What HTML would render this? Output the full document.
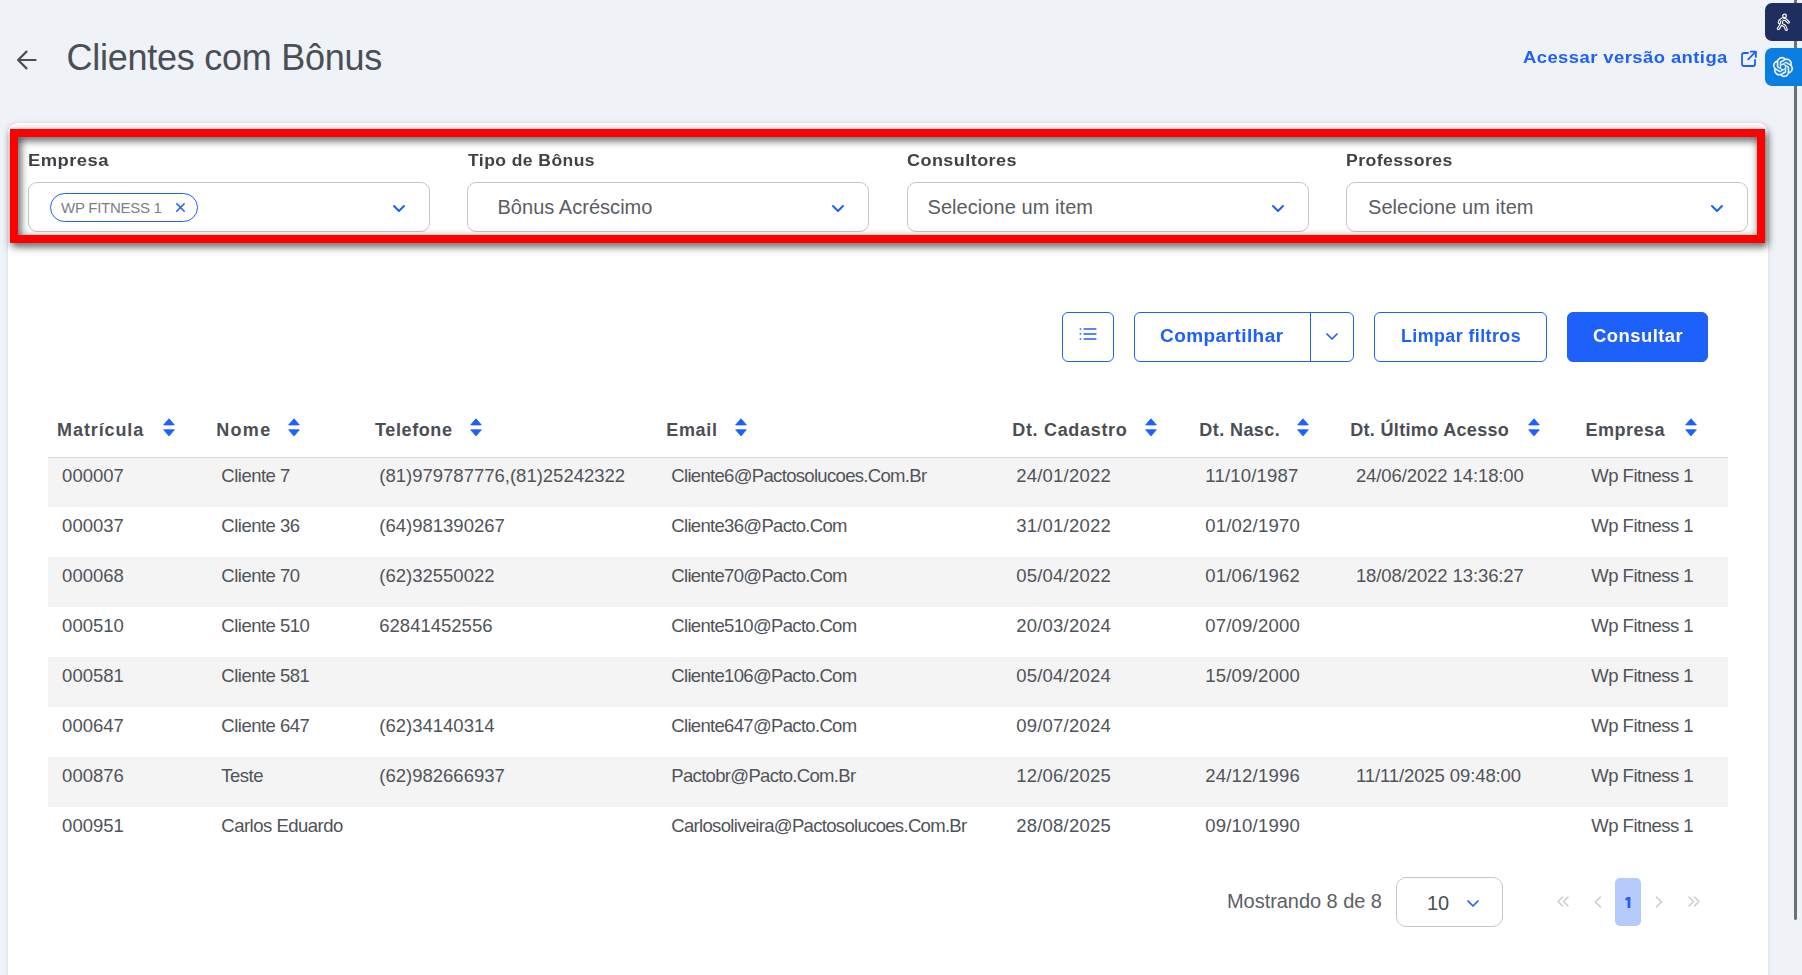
<!DOCTYPE html>
<html lang="pt-BR">
<head>
<meta charset="utf-8">
<title>Clientes com Bônus</title>
<style>
*{box-sizing:border-box;margin:0;padding:0}
html,body{width:1802px;height:975px;overflow:hidden}
body{background:#eff2f7;font-family:"Liberation Sans",sans-serif;position:relative;color:#4b4e55}
.abs{position:absolute}
.t{position:absolute;white-space:nowrap;line-height:1}
.b{font-weight:700}
svg{display:block;overflow:visible}
/* header */
.title{left:66.6px;top:40px;font-size:36px;letter-spacing:-0.27px;color:#4b4e55}
.link{left:1523px;top:49px;font-size:17px;letter-spacing:0.4px;transform:scaleX(1.084);transform-origin:0 0;color:#1e60fa;font-weight:700}
.side{position:absolute;left:1765px;width:45px;border-radius:7px}
.scroll{position:absolute;left:1794px;top:-4px;width:3px;height:924px;border-radius:2px;background:#6b7079}
/* card */
.card{position:absolute;left:8px;top:123px;width:1760px;height:900px;background:#fff;border-radius:9px;box-shadow:0 0 1px rgba(0,0,0,.18),0 0 6px rgba(0,0,0,.08)}
.red{position:absolute;left:10px;top:129px;width:1755px;height:114px;border:8px solid #ff0000;filter:drop-shadow(2px 3px 4px rgba(20,30,30,.85))}
.lbl{font-size:16px;font-weight:700;color:#3f4247;top:153px;transform-origin:0 0}
.sel{position:absolute;top:182px;width:402px;height:50px;border:1px solid #c5c7cc;border-radius:9px;background:#fff}
.seltxt{font-size:20px;color:#5a5d63;top:197px;letter-spacing:0px}
.chev{position:absolute}
/* buttons */
.btn{position:absolute;top:312px;height:50px;border:1px solid #1e60fa;border-radius:6px;background:#fff}
.btxt{font-size:17.5px;font-weight:700;color:#1e60fa;top:328px;transform-origin:0 0}
/* table */
.th{font-size:18px;font-weight:700;color:#4b4e55;top:421px}
.row{position:absolute;left:48px;width:1680px;height:50px}
.row.odd{background:#f4f4f4}
.td{font-size:18.5px;color:#505359}
.td.m{letter-spacing:0px}
.td.n{letter-spacing:0.2px}
.td.u{letter-spacing:-0.1px}
.td.s{letter-spacing:-0.5px}
.td.e{letter-spacing:-0.68px}
.pag{font-size:20px;color:#5c5f66;letter-spacing:-0.3px}
</style>
</head>
<body>
<!-- back arrow -->
<svg class="abs" style="left:15.5px;top:49px" width="21" height="22" viewBox="0 0 22 22">
  <path d="M20.5 11 H2.5 M11 2.2 L2.2 11 L11 19.8" fill="none" stroke="#4b4e55" stroke-width="2.3" stroke-linecap="round" stroke-linejoin="round"/>
</svg>
<div class="t title">Clientes com Bônus</div>
<div class="t link">Acessar versão antiga</div>
<svg class="abs" style="left:1740px;top:50px" width="17" height="17" viewBox="0 0 17 17">
  <path d="M8 3 H4 Q2 3 2 5 V14 Q2 16 4 16 H13 Q15 16 15 14 V9.8 M10.6 1.6 H15.9 V6.9 M15.6 1.9 L8.2 9.3" fill="none" stroke="#1e60fa" stroke-width="1.8" stroke-linecap="round" stroke-linejoin="round"/>
</svg>
<div class="scroll"></div>
<div class="side" style="top:3px;height:38px;background:#1e2f5f">
  <svg class="abs" style="left:10.8px;top:10.3px" width="14.5" height="19" viewBox="0 0 16 21">
    <g fill="none" stroke-linecap="round" stroke-linejoin="round">
      <circle cx="9.4" cy="3.2" r="2" stroke="#fff" stroke-width="1.4"/>
      <path d="M7 6.6 L5.8 12.2 M7 6.6 L4.3 8.4 L3.6 10.6 M7 6.6 L10.6 7.4 L13.6 10.2 M5.8 12.2 L2.6 17.2 M5.8 12.2 L9.6 14.2 L11.4 18.2" stroke="#fff" stroke-width="3.4"/>
      <path d="M7 6.6 L5.8 12.2 M7 6.6 L4.3 8.4 L3.6 10.6 M7 6.6 L10.6 7.4 L13.6 10.2 M5.8 12.2 L2.6 17.2 M5.8 12.2 L9.6 14.2 L11.4 18.2" stroke="#1e2f5f" stroke-width="1.1"/>
    </g>
  </svg>
</div>
<div class="side" style="top:48px;height:38px;background:#0b7ee2">
  <svg class="abs" style="left:7.8px;top:8.6px" width="20" height="20" viewBox="0 0 24 24"><path fill="#fff" stroke="#fff" stroke-width="0.35" d="M22.2819 9.8211a5.9847 5.9847 0 0 0-.5157-4.9108 6.0462 6.0462 0 0 0-6.5098-2.9A6.0651 6.0651 0 0 0 4.9807 4.1818a5.9847 5.9847 0 0 0-3.9977 2.9 6.0462 6.0462 0 0 0 .7427 7.0966 5.98 5.98 0 0 0 .511 4.9107 6.051 6.051 0 0 0 6.5146 2.9001A5.9847 5.9847 0 0 0 13.2599 24a6.0557 6.0557 0 0 0 5.7718-4.2058 5.9894 5.9894 0 0 0 3.9977-2.9001 6.0557 6.0557 0 0 0-.7475-7.0729zm-9.022 12.6081a4.4755 4.4755 0 0 1-2.8764-1.0408l.1419-.0804 4.7783-2.7582a.7948.7948 0 0 0 .3927-.6813v-6.7369l2.02 1.1686a.071.071 0 0 1 .038.052v5.5826a4.504 4.504 0 0 1-4.4945 4.4944zm-9.6607-4.1254a4.4708 4.4708 0 0 1-.5346-3.0137l.142.0852 4.783 2.7582a.7712.7712 0 0 0 .7806 0l5.8428-3.3685v2.3324a.0804.0804 0 0 1-.0332.0615L9.74 19.9502a4.4992 4.4992 0 0 1-6.1408-1.6464zM2.3408 7.8956a4.485 4.485 0 0 1 2.3655-1.9728V11.6a.7664.7664 0 0 0 .3879.6765l5.8144 3.3543-2.0201 1.1685a.0757.0757 0 0 1-.071 0l-4.8303-2.7865A4.504 4.504 0 0 1 2.3408 7.872zm16.5963 3.8558L13.1038 8.364 15.1192 7.2a.0757.0757 0 0 1 .071 0l4.8303 2.7913a4.4944 4.4944 0 0 1-.6765 8.1042v-5.6772a.79.79 0 0 0-.407-.667zm2.0107-3.0231l-.142-.0852-4.7735-2.7818a.7759.7759 0 0 0-.7854 0L9.409 9.2297V6.8974a.0662.0662 0 0 1 .0284-.0615l4.8303-2.7866a4.4992 4.4992 0 0 1 6.6802 4.66zM8.3065 12.863l-2.02-1.1638a.0804.0804 0 0 1-.038-.0567V6.0742a4.4992 4.4992 0 0 1 7.3757-3.4537l-.142.0805L8.704 5.459a.7948.7948 0 0 0-.3927.6813zm1.0976-2.3654l2.602-1.4998 2.6069 1.4998v2.9994l-2.5974 1.4997-2.6067-1.4997Z"/></svg>
</div>

<div class="card"></div>

<!-- filters -->
<div class="t lbl" style="left:28px;letter-spacing:0.4px;transform:scaleX(1.15)">Empresa</div>
<div class="t lbl" style="left:468px;letter-spacing:0.4px;transform:scaleX(1.095)">Tipo de Bônus</div>
<div class="t lbl" style="left:907px;letter-spacing:0.4px;transform:scaleX(1.125)">Consultores</div>
<div class="t lbl" style="left:1345.5px;letter-spacing:0.4px;transform:scaleX(1.102)">Professores</div>

<div class="sel" style="left:28px"></div>
<div class="sel" style="left:467px"></div>
<div class="sel" style="left:907px"></div>
<div class="sel" style="left:1346px"></div>

<div class="abs" style="left:50px;top:193px;width:148px;height:29px;border:1px solid #1e60fa;border-radius:15px"></div>
<div class="t" style="left:61px;top:199.5px;font-size:15px;letter-spacing:-0.27px;color:#7b7f87">WP FITNESS 1</div>
<svg class="abs" style="left:176px;top:203px" width="9" height="9" viewBox="0 0 9 9"><path d="M0.8 0.8 L8.2 8.2 M8.2 0.8 L0.8 8.2" stroke="#1e60fa" stroke-width="1.6" stroke-linecap="round"/></svg>

<div class="t seltxt" style="left:497.5px;letter-spacing:0.03px">Bônus Acréscimo</div>
<div class="t seltxt" style="left:927.5px;letter-spacing:0.06px">Selecione um item</div>
<div class="t seltxt" style="left:1368px;letter-spacing:0.06px">Selecione um item</div>

<svg class="chev" style="left:393px;top:205px" width="12" height="7" viewBox="0 0 12 7"><path d="M1 1 L6 6 L11 1" fill="none" stroke="#1e60fa" stroke-width="2" stroke-linecap="round" stroke-linejoin="round"/></svg>
<svg class="chev" style="left:832px;top:205px" width="12" height="7" viewBox="0 0 12 7"><path d="M1 1 L6 6 L11 1" fill="none" stroke="#1e60fa" stroke-width="2" stroke-linecap="round" stroke-linejoin="round"/></svg>
<svg class="chev" style="left:1272px;top:205px" width="12" height="7" viewBox="0 0 12 7"><path d="M1 1 L6 6 L11 1" fill="none" stroke="#1e60fa" stroke-width="2" stroke-linecap="round" stroke-linejoin="round"/></svg>
<svg class="chev" style="left:1711px;top:205px" width="12" height="7" viewBox="0 0 12 7"><path d="M1 1 L6 6 L11 1" fill="none" stroke="#1e60fa" stroke-width="2" stroke-linecap="round" stroke-linejoin="round"/></svg>

<div class="red"></div>

<!-- buttons -->
<div class="btn" style="left:1062px;width:52px"></div>
<svg class="abs" style="left:1079px;top:327px" width="18" height="14" viewBox="0 0 18 14">
  <g fill="#1e60fa">
    <rect x="0.6" y="1.2" width="1.6" height="1.6" rx="0.4"/><rect x="0.6" y="6.2" width="1.6" height="1.6" rx="0.4"/><rect x="0.6" y="11.2" width="1.6" height="1.6" rx="0.4"/>
    <rect x="4.4" y="1.25" width="13.2" height="1.5" rx="0.75"/><rect x="4.4" y="6.25" width="13.2" height="1.5" rx="0.75"/><rect x="4.4" y="11.25" width="13.2" height="1.5" rx="0.75"/>
  </g>
</svg>
<div class="btn" style="left:1134px;width:220px"></div>
<div class="abs" style="left:1310px;top:312px;width:1px;height:50px;background:#1e60fa"></div>
<div class="t btxt" style="left:1159.5px;letter-spacing:0.4px;transform:scaleX(1.086)">Compartilhar</div>
<svg class="chev" style="left:1326px;top:333px" width="12" height="7" viewBox="0 0 12 7"><path d="M1 1 L6 6 L11 1" fill="none" stroke="#1e60fa" stroke-width="1.7" stroke-linecap="round" stroke-linejoin="round"/></svg>
<div class="btn" style="left:1374px;width:173px"></div>
<div class="t btxt" style="left:1400.5px;letter-spacing:0.4px;transform:scaleX(1.022)">Limpar filtros</div>
<div class="btn" style="left:1567px;width:141px;background:#1e60fa"></div>
<div class="t btxt" style="left:1592.5px;letter-spacing:0.4px;transform:scaleX(1.057);color:#fff">Consultar</div>

<!-- table -->
<div class="t th" style="left:57.1px;letter-spacing:0.89px">Matrícula</div>
<svg class="abs" style="left:163.1px;top:418.2px" width="12" height="19" viewBox="0 0 12 19"><path d="M0.7 6.9 L6 0.8 L11.3 6.9 Z M0.7 11.8 L11.3 11.8 L6 17.9 Z" fill="#1e60fa" stroke="#1e60fa" stroke-width="0.9" stroke-linejoin="round"/></svg>
<div class="t th" style="left:216.2px;letter-spacing:1.33px">Nome</div>
<svg class="abs" style="left:288.2px;top:418.2px" width="12" height="19" viewBox="0 0 12 19"><path d="M0.7 6.9 L6 0.8 L11.3 6.9 Z M0.7 11.8 L11.3 11.8 L6 17.9 Z" fill="#1e60fa" stroke="#1e60fa" stroke-width="0.9" stroke-linejoin="round"/></svg>
<div class="t th" style="left:375.1px;letter-spacing:0.59px">Telefone</div>
<svg class="abs" style="left:470.4px;top:418.2px" width="12" height="19" viewBox="0 0 12 19"><path d="M0.7 6.9 L6 0.8 L11.3 6.9 Z M0.7 11.8 L11.3 11.8 L6 17.9 Z" fill="#1e60fa" stroke="#1e60fa" stroke-width="0.9" stroke-linejoin="round"/></svg>
<div class="t th" style="left:666.2px;letter-spacing:0.69px">Email</div>
<svg class="abs" style="left:734.5px;top:418.2px" width="12" height="19" viewBox="0 0 12 19"><path d="M0.7 6.9 L6 0.8 L11.3 6.9 Z M0.7 11.8 L11.3 11.8 L6 17.9 Z" fill="#1e60fa" stroke="#1e60fa" stroke-width="0.9" stroke-linejoin="round"/></svg>
<div class="t th" style="left:1012.2px;letter-spacing:0.69px">Dt. Cadastro</div>
<svg class="abs" style="left:1145.1px;top:418.2px" width="12" height="19" viewBox="0 0 12 19"><path d="M0.7 6.9 L6 0.8 L11.3 6.9 Z M0.7 11.8 L11.3 11.8 L6 17.9 Z" fill="#1e60fa" stroke="#1e60fa" stroke-width="0.9" stroke-linejoin="round"/></svg>
<div class="t th" style="left:1199.3px;letter-spacing:0.42px">Dt. Nasc.</div>
<svg class="abs" style="left:1297.4px;top:418.2px" width="12" height="19" viewBox="0 0 12 19"><path d="M0.7 6.9 L6 0.8 L11.3 6.9 Z M0.7 11.8 L11.3 11.8 L6 17.9 Z" fill="#1e60fa" stroke="#1e60fa" stroke-width="0.9" stroke-linejoin="round"/></svg>
<div class="t th" style="left:1350.2px;letter-spacing:0.33px">Dt. Último Acesso</div>
<svg class="abs" style="left:1528.1px;top:418.2px" width="12" height="19" viewBox="0 0 12 19"><path d="M0.7 6.9 L6 0.8 L11.3 6.9 Z M0.7 11.8 L11.3 11.8 L6 17.9 Z" fill="#1e60fa" stroke="#1e60fa" stroke-width="0.9" stroke-linejoin="round"/></svg>
<div class="t th" style="left:1585.5px;letter-spacing:0.51px">Empresa</div>
<svg class="abs" style="left:1684.6px;top:418.2px" width="12" height="19" viewBox="0 0 12 19"><path d="M0.7 6.9 L6 0.8 L11.3 6.9 Z M0.7 11.8 L11.3 11.8 L6 17.9 Z" fill="#1e60fa" stroke="#1e60fa" stroke-width="0.9" stroke-linejoin="round"/></svg>
<div class="abs" style="left:48px;top:457px;width:1680px;height:1px;background:#d9dadd"></div>
<div class="row odd" style="top:458px;height:49px"></div>
<div class="t td m" style="left:62.1px;top:467.3px">000007</div>
<div class="t td s" style="left:221.3px;top:467.3px">Cliente 7</div>
<div class="t td m" style="left:379.3px;top:467.3px">(81)979787776,(81)25242322</div>
<div class="t td e" style="left:671.3px;top:467.3px">Cliente6@Pactosolucoes.Com.Br</div>
<div class="t td n" style="left:1016.3px;top:467.3px">24/01/2022</div>
<div class="t td n" style="left:1205.3px;top:467.3px">11/10/1987</div>
<div class="t td u" style="left:1355.9px;top:467.3px">24/06/2022 14:18:00</div>
<div class="t td s" style="left:1591.2px;top:467.3px">Wp Fitness 1</div>
<div class="t td m" style="left:62.1px;top:517.3px">000037</div>
<div class="t td s" style="left:221.3px;top:517.3px">Cliente 36</div>
<div class="t td m" style="left:379.3px;top:517.3px">(64)981390267</div>
<div class="t td e" style="left:671.3px;top:517.3px">Cliente36@Pacto.Com</div>
<div class="t td n" style="left:1016.3px;top:517.3px">31/01/2022</div>
<div class="t td n" style="left:1205.3px;top:517.3px">01/02/1970</div>
<div class="t td s" style="left:1591.2px;top:517.3px">Wp Fitness 1</div>
<div class="row odd" style="top:557px;height:50px"></div>
<div class="t td m" style="left:62.1px;top:567.3px">000068</div>
<div class="t td s" style="left:221.3px;top:567.3px">Cliente 70</div>
<div class="t td m" style="left:379.3px;top:567.3px">(62)32550022</div>
<div class="t td e" style="left:671.3px;top:567.3px">Cliente70@Pacto.Com</div>
<div class="t td n" style="left:1016.3px;top:567.3px">05/04/2022</div>
<div class="t td n" style="left:1205.3px;top:567.3px">01/06/1962</div>
<div class="t td u" style="left:1355.9px;top:567.3px">18/08/2022 13:36:27</div>
<div class="t td s" style="left:1591.2px;top:567.3px">Wp Fitness 1</div>
<div class="t td m" style="left:62.1px;top:617.3px">000510</div>
<div class="t td s" style="left:221.3px;top:617.3px">Cliente 510</div>
<div class="t td m" style="left:379.3px;top:617.3px">62841452556</div>
<div class="t td e" style="left:671.3px;top:617.3px">Cliente510@Pacto.Com</div>
<div class="t td n" style="left:1016.3px;top:617.3px">20/03/2024</div>
<div class="t td n" style="left:1205.3px;top:617.3px">07/09/2000</div>
<div class="t td s" style="left:1591.2px;top:617.3px">Wp Fitness 1</div>
<div class="row odd" style="top:657px;height:50px"></div>
<div class="t td m" style="left:62.1px;top:667.3px">000581</div>
<div class="t td s" style="left:221.3px;top:667.3px">Cliente 581</div>
<div class="t td e" style="left:671.3px;top:667.3px">Cliente106@Pacto.Com</div>
<div class="t td n" style="left:1016.3px;top:667.3px">05/04/2024</div>
<div class="t td n" style="left:1205.3px;top:667.3px">15/09/2000</div>
<div class="t td s" style="left:1591.2px;top:667.3px">Wp Fitness 1</div>
<div class="t td m" style="left:62.1px;top:717.3px">000647</div>
<div class="t td s" style="left:221.3px;top:717.3px">Cliente 647</div>
<div class="t td m" style="left:379.3px;top:717.3px">(62)34140314</div>
<div class="t td e" style="left:671.3px;top:717.3px">Cliente647@Pacto.Com</div>
<div class="t td n" style="left:1016.3px;top:717.3px">09/07/2024</div>
<div class="t td s" style="left:1591.2px;top:717.3px">Wp Fitness 1</div>
<div class="row odd" style="top:757px;height:50px"></div>
<div class="t td m" style="left:62.1px;top:767.3px">000876</div>
<div class="t td s" style="left:221.3px;top:767.3px">Teste</div>
<div class="t td m" style="left:379.3px;top:767.3px">(62)982666937</div>
<div class="t td e" style="left:671.3px;top:767.3px">Pactobr@Pacto.Com.Br</div>
<div class="t td n" style="left:1016.3px;top:767.3px">12/06/2025</div>
<div class="t td n" style="left:1205.3px;top:767.3px">24/12/1996</div>
<div class="t td u" style="left:1355.9px;top:767.3px">11/11/2025 09:48:00</div>
<div class="t td s" style="left:1591.2px;top:767.3px">Wp Fitness 1</div>
<div class="t td m" style="left:62.1px;top:817.3px">000951</div>
<div class="t td s" style="left:221.3px;top:817.3px">Carlos Eduardo</div>
<div class="t td e" style="left:671.3px;top:817.3px">Carlosoliveira@Pactosolucoes.Com.Br</div>
<div class="t td n" style="left:1016.3px;top:817.3px">28/08/2025</div>
<div class="t td n" style="left:1205.3px;top:817.3px">09/10/1990</div>
<div class="t td s" style="left:1591.2px;top:817.3px">Wp Fitness 1</div>
<!-- pagination -->
<div class="t pag" style="left:1227px;top:891.4px;letter-spacing:-0.05px">Mostrando 8 de 8</div>
<div class="abs" style="left:1396px;top:877px;width:107px;height:50px;border:1px solid #c5c7cc;border-radius:10px"></div>
<div class="t pag" style="left:1427px;top:893px;color:#4b4e55;letter-spacing:0">10</div>
<svg class="chev" style="left:1467px;top:900px" width="12" height="7" viewBox="0 0 12 7"><path d="M1 1 L6 6 L11 1" fill="none" stroke="#1e60fa" stroke-width="1.7" stroke-linecap="round" stroke-linejoin="round"/></svg>
<svg class="abs" style="left:1557px;top:896px" width="12" height="11" viewBox="0 0 12 11"><path d="M5.5 1 L1 5.5 L5.5 10 M11 1 L6.5 5.5 L11 10" fill="none" stroke="#c9c9c9" stroke-width="1.4" stroke-linecap="round" stroke-linejoin="round"/></svg>
<svg class="abs" style="left:1594px;top:896px" width="8" height="12" viewBox="0 0 8 12"><path d="M6.5 1 L1.3 6 L6.5 11" fill="none" stroke="#c9c9c9" stroke-width="1.4" stroke-linecap="round" stroke-linejoin="round"/></svg>
<div class="abs" style="left:1615px;top:878px;width:26px;height:48px;border-radius:5px;background:#b6cafb"></div>
<svg class="abs" style="left:1625px;top:897px" width="6" height="11" viewBox="0 0 6 11"><path d="M2.6 0 H5.4 V11 H2.6 V3 L0.4 3.6 V1.2 Z" fill="#1e60fa"/></svg>
<svg class="abs" style="left:1655px;top:896px" width="8" height="12" viewBox="0 0 8 12"><path d="M1.3 1 L6.5 6 L1.3 11" fill="none" stroke="#c9c9c9" stroke-width="1.4" stroke-linecap="round" stroke-linejoin="round"/></svg>
<svg class="abs" style="left:1688px;top:896px" width="12" height="11" viewBox="0 0 12 11"><path d="M1 1 L5.5 5.5 L1 10 M6.5 1 L11 5.5 L6.5 10" fill="none" stroke="#c9c9c9" stroke-width="1.4" stroke-linecap="round" stroke-linejoin="round"/></svg>

</body>
</html>
